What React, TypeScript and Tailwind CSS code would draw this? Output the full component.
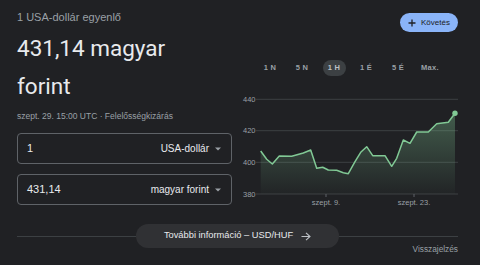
import React from "react";

const pts: [number, number][] = [
  [20.7, 59], [26.7, 67.3], [32.3, 72], [39.3, 64], [51.7, 64.3], [63.3, 61], [70.7, 58],
  [76.7, 76.3], [82.7, 75.3], [88.3, 78], [96.7, 78.3], [103.3, 80.7], [108.3, 81.7],
  [115, 69.7], [120.7, 60.3], [126.7, 54.7], [132.7, 63.7], [145, 63.7], [151.7, 74.3],
  [156.7, 66.3], [163.3, 48], [170, 51.3], [176.7, 40], [188.3, 40], [196.7, 31.7],
  [208.3, 30.3], [215, 21.3],
];

function Chart() {
  const line = pts.map((p, i) => `${i === 0 ? "M" : "L"}${p[0]},${p[1]}`).join(" ");
  const area = `${line} L215,102 L20.7,102 Z`;
  const grid = [
    { y: 7.3, v: "440" },
    { y: 38.7, v: "420" },
    { y: 70.3, v: "400" },
    { y: 102, v: "380" },
  ];
  return (
    <svg width="218" height="120" viewBox="0 0 218 120" className="block">
      <defs>
        <linearGradient id="g" x1="0" y1="0" x2="0" y2="1">
          <stop offset="0%" stopColor="#81c995" stopOpacity="0.35" />
          <stop offset="100%" stopColor="#81c995" stopOpacity="0.02" />
        </linearGradient>
      </defs>
      {grid.map((g) => (
        <g key={g.v}>
          <line x1="16" x2="218" y1={g.y} y2={g.y} stroke="#3c4043" strokeWidth="1" />
          <text x="3" y={g.y + 2.6} fontSize="7.5" fill="#9aa0a6" fontFamily="'Liberation Sans', Arial, sans-serif">
            {g.v}
          </text>
        </g>
      ))}
      <path d={area} fill="url(#g)" />
      <path d={line} fill="none" stroke="#81c995" strokeWidth="1.5" strokeLinejoin="round" />
      <circle cx="215" cy="21.3" r="2.7" fill="#81c995" />
      <line x1="86" x2="86" y1="102" y2="105" stroke="#5f6368" strokeWidth="1" />
      <line x1="174" x2="174" y1="102" y2="105" stroke="#5f6368" strokeWidth="1" />
      <text x="86" y="113" fontSize="7.5" fill="#9aa0a6" textAnchor="middle" fontFamily="'Liberation Sans', Arial, sans-serif">
        szept. 9.
      </text>
      <text x="174" y="113" fontSize="7.5" fill="#9aa0a6" textAnchor="middle" fontFamily="'Liberation Sans', Arial, sans-serif">
        szept. 23.
      </text>
    </svg>
  );
}

function Caret() {
  return (
    <svg width="6" height="4" viewBox="0 0 6 4" className="ml-[6px]">
      <path d="M0 0.5 L6 0.5 L3 3.5 Z" fill="#9aa0a6" />
    </svg>
  );
}

export default function App() {
  const tabs = ["1 N", "5 N", "1 H", "1 É", "5 É", "Max."];
  return (
    <div
      className="w-[480px] h-[265px] bg-[#202124] flex flex-col pl-[17px] pr-[22px] pt-[9px] overflow-hidden"
      style={{ fontFamily: "'Liberation Sans', Arial, sans-serif" }}
    >
      <div className="flex flex-row gap-[8px]">
        <div className="w-[215px] flex flex-col">
          <div className="text-[11px] leading-[16px] text-[#9aa0a6]">1 USA-dollár egyenlő</div>
          <div
            className="text-[22.5px] leading-[38px] mt-[3.5px] text-[#e8eaed]"
            style={{ fontFamily: "Roboto, 'Liberation Sans', Arial, sans-serif" }}
          >
            <div>431,14 magyar</div>
            <div>forint</div>
          </div>
          <div className="text-[8.5px] leading-[12px] mt-[5.5px] text-[#9aa0a6]">
            szept. 29. 15:00 UTC · Felelősségkizárás
          </div>
          <div className="mt-[11px] h-[31px] border border-[#5f6368] rounded-[4px] flex items-center pl-[9px] pr-[10px]">
            <span className="text-[11px] text-[#e8eaed] flex-1">1</span>
            <span className="text-[10px] text-[#e8eaed]">USA-dollár</span>
            <Caret />
          </div>
          <div className="mt-[10px] h-[31px] border border-[#5f6368] rounded-[4px] flex items-center pl-[9px] pr-[10px]">
            <span className="text-[11px] text-[#e8eaed] flex-1">431,14</span>
            <span className="text-[10px] text-[#e8eaed]">magyar forint</span>
            <Caret />
          </div>
        </div>
        <div className="w-[218px] flex flex-col">
          <div className="self-end mt-[4px] h-[19px] w-[58px] rounded-full bg-[#8ab4f8] flex items-center pl-[8px] gap-[5px] text-[#202124]">
            <svg width="8" height="8" viewBox="0 0 8 8">
              <path d="M4 0.5 V7.5 M0.5 4 H7.5" stroke="#202124" strokeWidth="1.3" />
            </svg>
            <span className="text-[8px] leading-none">Követés</span>
          </div>
          <div className="flex flex-row mt-[28px] ml-[14px]">
            {tabs.map((t) => (
              <div key={t} className="w-[32px] flex justify-center">
                <div
                  className={
                    t === "1 H"
                      ? "h-[16px] w-[23px] rounded-full bg-[#3c4043] flex items-center justify-center text-[7.5px] font-bold tracking-[0.3px] text-[#bdc1c6]"
                      : "h-[16px] flex items-center justify-center text-[7.5px] font-bold tracking-[0.3px] text-[#9aa0a6]"
                  }
                >
                  {t}
                </div>
              </div>
            ))}
          </div>
          <div className="mt-[16px]">
            <Chart />
          </div>
        </div>
      </div>
      <div className="flex flex-row items-center mt-[12px] h-[24px]">
        <div className="flex-1 h-px bg-[#3c4043]" />
        <div className="h-[24px] w-[203px] rounded-full bg-[#303134] flex items-center justify-center gap-[8px]">
          <span className="text-[9.3px] text-[#e8eaed]">További információ – USD/HUF</span>
          <svg width="10" height="9" viewBox="0 0 10 9">
            <path d="M0.5 4.5 H9 M5 0.8 L9 4.5 L5 8.2" fill="none" stroke="#bdc1c6" strokeWidth="1.1" />
          </svg>
        </div>
        <div className="flex-1 h-px bg-[#3c4043]" />
      </div>
      <div className="self-end text-[8.3px] leading-[10px] mt-[-4px] text-[#9aa0a6]">Visszajelzés</div>
    </div>
  );
}
